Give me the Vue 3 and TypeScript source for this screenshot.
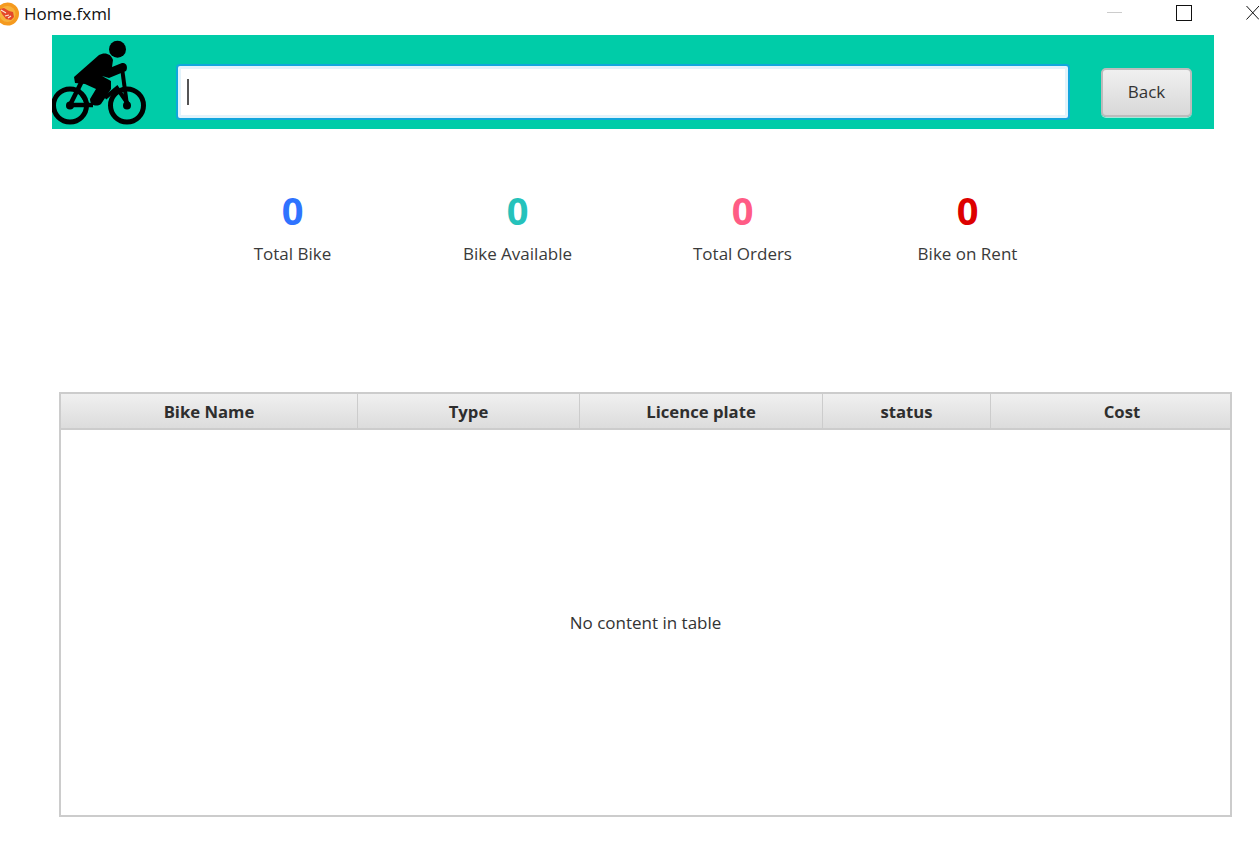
<script setup lang="ts">
interface Stat {
  value: number
  label: string
  color: string
}

const stats: Stat[] = [
  { value: 0, label: 'Total Bike', color: '#2f73ff' },
  { value: 0, label: 'Bike Available', color: '#25c2bb' },
  { value: 0, label: 'Total Orders', color: '#ff5c85' },
  { value: 0, label: 'Bike on Rent', color: '#dd0000' },
]

// the last column runs past the table edge, so its title sits right of centre
const columns = [
  { title: 'Bike Name', width: 297 },
  { title: 'Type', width: 222 },
  { title: 'Licence plate', width: 243 },
  { title: 'status', width: 168 },
  { title: 'Cost', width: 263 },
]
</script>

<template>
  <div class="window">
    <div class="titlebar">
      <div class="title-left">
        <svg class="app-icon" width="20" height="24" viewBox="0 0 20 24">
          <circle cx="7.5" cy="12" r="11.5" fill="#f59a1e" />
          <circle cx="7.5" cy="12" r="8" fill="#f6b23c" />
          <path d="M0 7 L4 6 L9 9 L13 10 L14 15 L11 18 L6 17 L2 12 Z" fill="#e4472a" />
          <path d="M1 8 L6 11 M5 14 L9 13 M8 16 L11 14" fill="none" stroke="#fde6d2" stroke-width="1.2" />
        </svg>
        <span class="title-text">Home.fxml</span>
      </div>
      <div class="window-controls">
        <span class="min-btn"></span>
        <span class="max-btn"></span>
        <svg class="close-btn" width="13" height="15" viewBox="0 0 13 15">
          <path d="M0.5 1 L13 14.5 M13 1 L0.5 14.5" stroke="#111" stroke-width="1" fill="none" />
        </svg>
      </div>
    </div>

    <header class="top-bar">
      <svg class="logo" width="95" height="94" viewBox="0 0 95 94">
        <g fill="none" stroke="#000">
          <circle cx="18" cy="70.5" r="16.5" stroke-width="5" />
          <circle cx="75" cy="70.5" r="16.5" stroke-width="5" />
          <path d="M30 46 L18 70 L41 70" stroke-width="4.5" />
          <path d="M26 54 L36 70" stroke-width="3.5" />
          <path d="M70 33 L75 70" stroke-width="4" />
          <path d="M53 63 L65 53 L76 69" stroke-width="4" />
        </g>
        <circle cx="65.5" cy="14.3" r="8.5" fill="#000" />
        <circle cx="18" cy="70.5" r="4" fill="#000" />
        <circle cx="75" cy="70.5" r="4" fill="#000" />
        <path
          d="M22 42 L47 20 C52 17 59 18 61 25 L60 32 L70 28 C75 27 76 33 74 36 L57 43 L50 41 L59 46 L59 54 L49 69 C45 72 38 71 38 64 L44 54 L33 49 L23 48 Z"
          fill="#000"
        />
      </svg>
      <div class="search-box">
        <span class="caret"></span>
      </div>
      <button class="back-btn" type="button">Back</button>
    </header>

    <section class="stats">
      <div v-for="stat in stats" :key="stat.label" class="stat">
        <div class="stat-value" :style="{ color: stat.color }">{{ stat.value }}</div>
        <div class="stat-label">{{ stat.label }}</div>
      </div>
    </section>

    <section class="table">
      <div class="table-head">
        <div
          v-for="col in columns"
          :key="col.title"
          class="table-col"
          :style="{ width: col.width + 'px' }"
        >
          {{ col.title }}
        </div>
      </div>
      <div class="table-body">No content in table</div>
    </section>
  </div>
</template>

<style>
html,
body {
  background: #fff;
}
</style>

<style scoped>
.window {
  width: 1259px;
  height: 849px;
  overflow: hidden;
  background: #fff;
  font-family: 'Open Sans', 'Noto Sans', sans-serif;
  color: #333;
}

.titlebar {
  height: 35px;
  display: flex;
  justify-content: space-between;
  align-items: flex-start;
}

.title-left {
  display: flex;
  align-items: center;
  gap: 4px;
  height: 27px;
}

.app-icon {
  flex-shrink: 0;
}

.title-text {
  font-size: 17px;
  color: #111;
}

.window-controls {
  display: flex;
  align-items: center;
  height: 25px;
}

.min-btn {
  width: 15px;
  height: 1px;
  background: #ccc;
  margin-right: 54px;
}

.max-btn {
  width: 14px;
  height: 14px;
  border: 1px solid #111;
  margin-right: 54px;
}

.close-btn {
  display: block;
}

.top-bar {
  width: 1162px;
  height: 94px;
  margin-left: 52px;
  background: #00cca8;
  display: flex;
  align-items: flex-start;
}

.logo {
  flex-shrink: 0;
  margin-right: 30px;
}

.search-box {
  width: 894px;
  height: 56px;
  margin-top: 29px;
  margin-left: -1px;
  box-sizing: border-box;
  background: #fff;
  border: 2px solid #12a6dc;
  border-radius: 4px;
  box-shadow: inset 0 0 0 3px #e2f3fb;
  display: flex;
  align-items: center;
  padding-left: 9px;
}

.caret {
  width: 2px;
  height: 26px;
  background: #555;
}

.back-btn {
  width: 91px;
  height: 49px;
  margin-top: 33px;
  margin-left: 31px;
  box-sizing: border-box;
  border: 2px solid #bcbcbc;
  border-radius: 5px;
  background: linear-gradient(#f0f0f0, #d8d8d8);
  box-shadow: 0 1px 0 #a5e9dc;
  font-family: inherit;
  font-size: 17px;
  color: #333;
  padding: 0 0 2px;
}

.stats {
  display: flex;
  margin: 58px 0 0 180px;
  height: 205px;
}

.stat {
  width: 225px;
  text-align: center;
}

.stat-value {
  font-size: 38px;
  font-weight: 700;
  line-height: 46px;
}

.stat-label {
  font-size: 17px;
  line-height: 22px;
  margin-top: 10px;
  color: #3a3a3a;
}

.table {
  width: 1173px;
  height: 425px;
  margin-left: 59px;
  box-sizing: border-box;
  border: 2px solid #cccccc;
  display: flex;
  flex-direction: column;
}

.table-head {
  display: flex;
  height: 34px;
  flex-shrink: 0;
  overflow: hidden;
  border-bottom: 2px solid #cccccc;
}

.table-col {
  flex-shrink: 0;
  box-sizing: border-box;
  display: flex;
  align-items: center;
  justify-content: center;
  background: linear-gradient(#f0f0f0, #dcdcdc);
  border-right: 1px solid #cccccc;
  font-size: 16.7px;
  font-weight: 700;
  color: #2e2e2e;
}

.table-body {
  flex: 1;
  display: flex;
  align-items: center;
  justify-content: center;
  font-size: 17px;
  color: #333;
}
</style>
